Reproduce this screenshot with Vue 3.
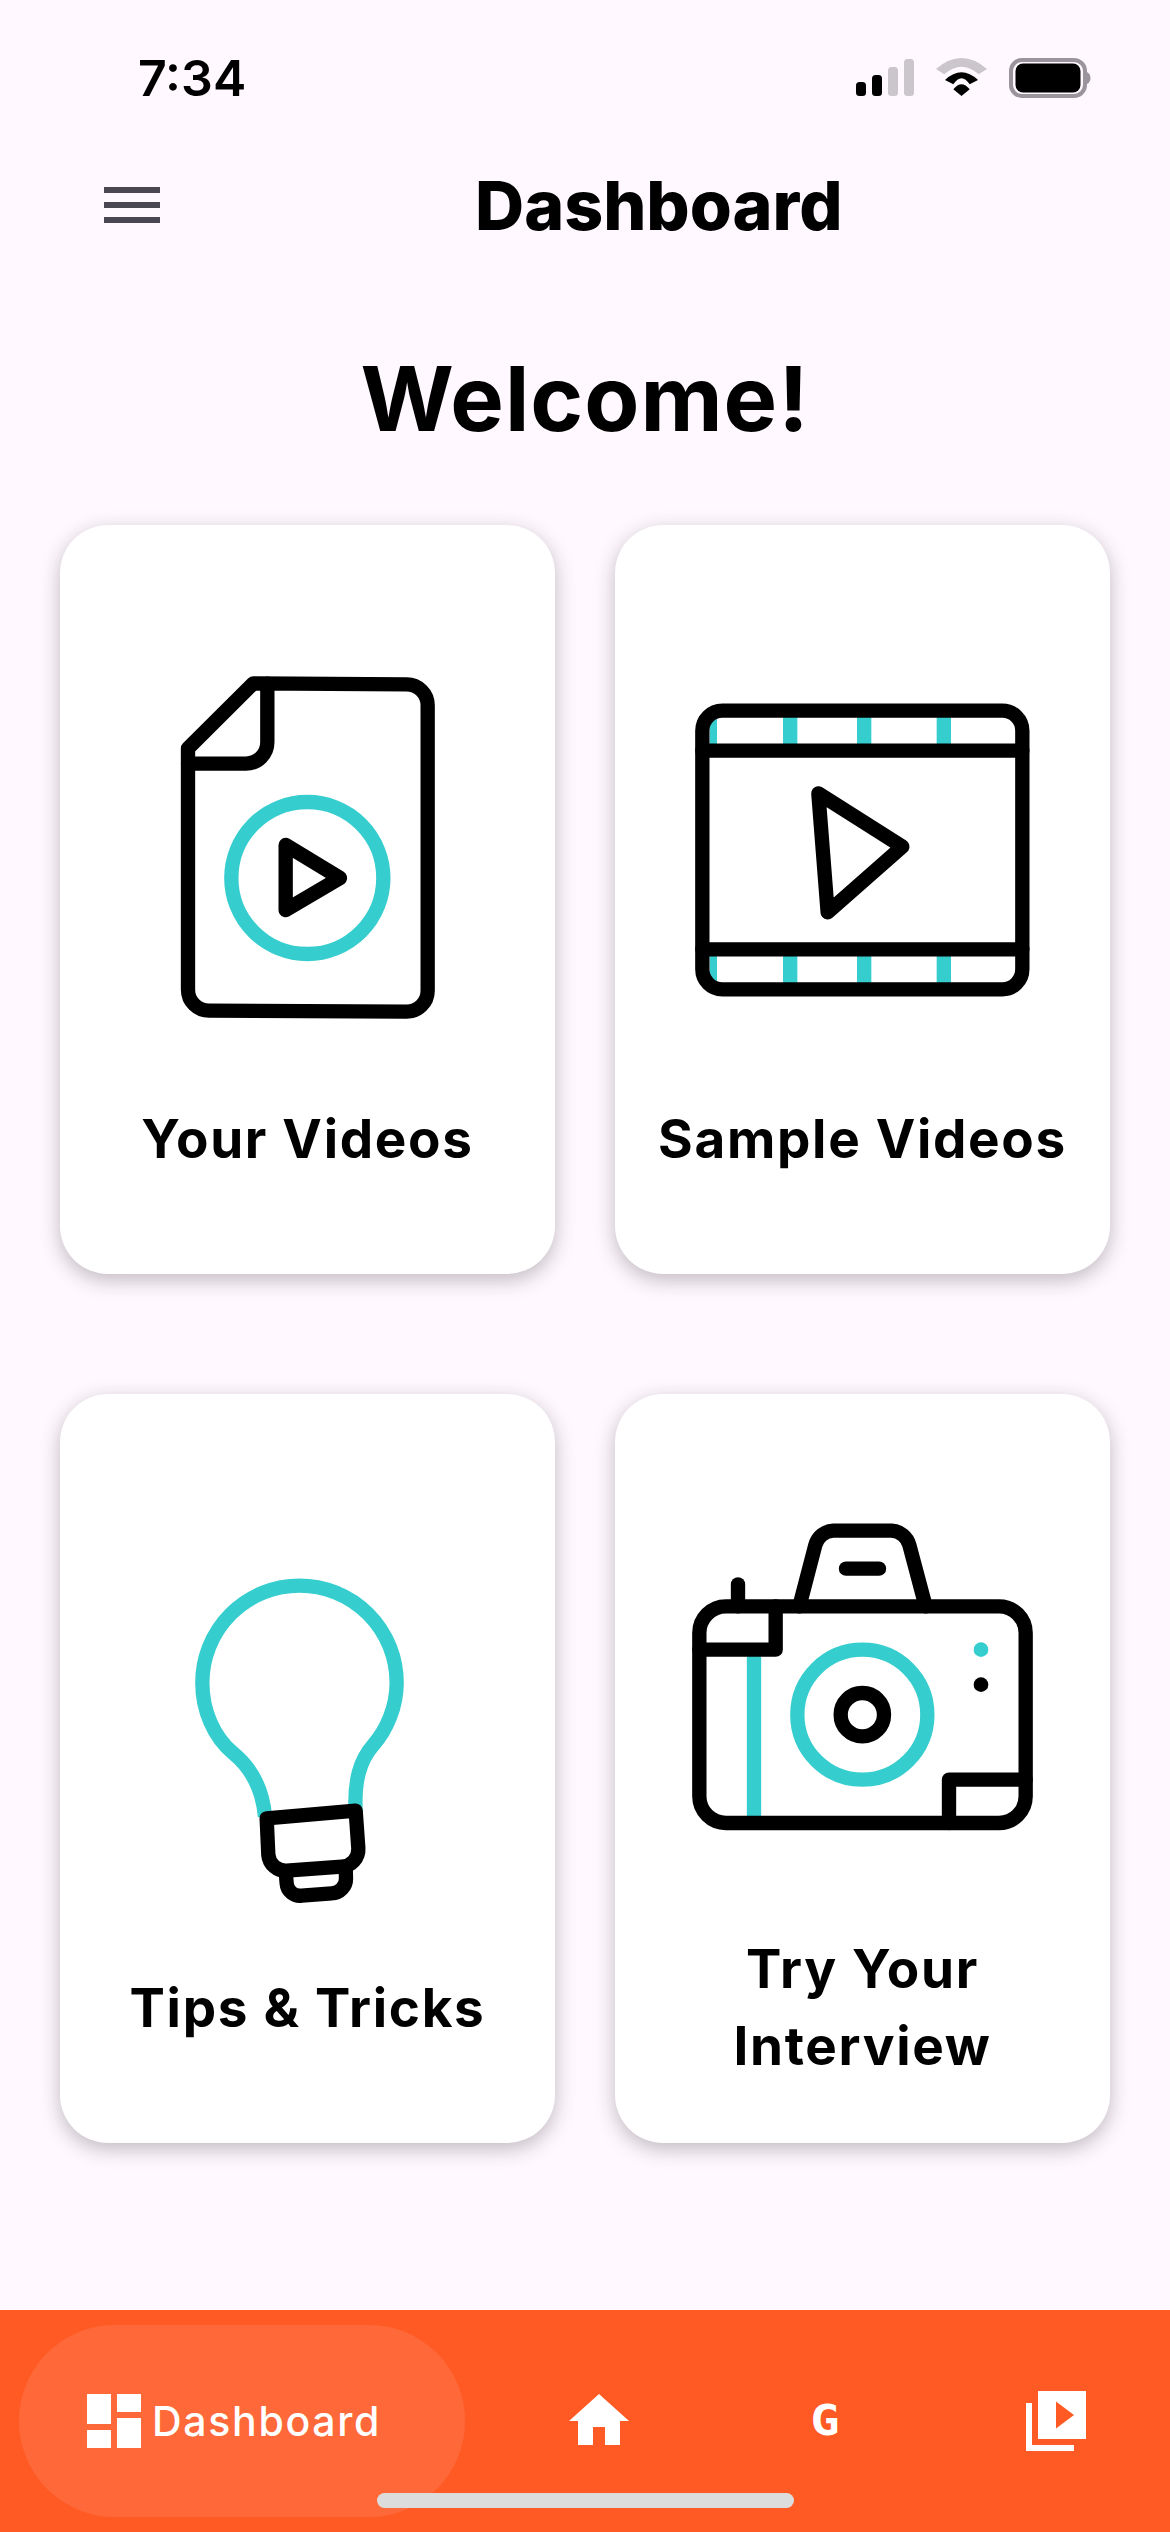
<template>
  <div class="screen">
    <div class="status-bar">
      <span class="time">7:34</span>
      <svg class="status-icons" width="234" height="40" viewBox="0 0 234 40">
        <rect x="0" y="24" width="10" height="14" rx="3.5" fill="#000" />
        <rect x="16" y="17" width="10" height="21" rx="3.5" fill="#000" />
        <rect x="32" y="9" width="10" height="29" rx="3.5" fill="#cbc6cc" />
        <rect x="48" y="1" width="10" height="37" rx="3.5" fill="#cbc6cc" />
        <path d="M80 11Q105.5-11 131 11L122.7 16.3Q105.5 1.1 88.3 16.3Z" fill="#cbc6cc" />
        <path d="M89 22Q105.5 6.6 122 22L113.7 26.3Q105.5 14.3 97.3 26.3Z" fill="#000" />
        <path d="M97.3 31.3Q105.5 21 113.7 31.3L105.5 38Z" fill="#000" />
        <rect x="155" y="2" width="74" height="36" rx="11" fill="none" stroke="#9a949c" stroke-width="4" />
        <rect x="159.500" y="5.500" width="65" height="29" rx="7.500" fill="#000" />
        <path d="M231 14Q234.500 16 234.500 20Q234.500 24 231 26Z" fill="#9a949c" />
      </svg>
    </div>

    <div class="app-header">
      <div class="menu-btn"><i></i><i></i><i></i></div>
      <h2>Dashboard</h2>
    </div>

    <h1 class="welcome">Welcome!</h1>

    <div class="card-grid">
      <div class="card">
        <svg class="card-icon" viewBox="0 0 1020 1200">
          <g transform="translate(6 0)" fill="none" stroke-width="43" stroke-linejoin="round" stroke-linecap="round">
            <circle cx="502" cy="714" r="228" stroke="#35cdce" />
            <g stroke="#000">
              <path d="M144 325L340 130L800 133A63 63 0 0 1 863 196V1052A63 63 0 0 1 800 1115L207 1112A63 63 0 0 1 144 1049Z" />
              <path d="M382 131V307A64 64 0 0 1 318 371H144" />
              <path d="M437 615L600 714L437 810Z" />
            </g>
          </g>
        </svg>
        <div class="card-label">Your Videos</div>
      </div>

      <div class="card">
        <svg class="card-icon" viewBox="0 0 1020 1200">
          <g transform="translate(-69 120)" fill="none" stroke-width="43" stroke-linejoin="round" stroke-linecap="round">
            <g fill="#35cdce">
              <rect x="119" y="100" width="22" height="100" />
              <rect x="339" y="100" width="43" height="100" />
              <rect x="561" y="100" width="43" height="100" />
              <rect x="800" y="100" width="43" height="100" />
              <rect x="119" y="820" width="22" height="100" />
              <rect x="339" y="820" width="43" height="100" />
              <rect x="561" y="820" width="43" height="100" />
              <rect x="800" y="820" width="43" height="100" />
            </g>
            <g stroke="#000">
              <rect x="97" y="92" width="960" height="836" rx="60" />
              <path d="M97 212H1057M97 808H1057" />
              <path d="M445 340L697 500L473 697Z" />
            </g>
          </g>
        </svg>
        <div class="card-label">Sample Videos</div>
      </div>

      <div class="card">
        <svg class="card-icon" viewBox="0 0 1020 1200">
          <g transform="translate(96 123)" fill="none" stroke-width="43" stroke-linejoin="round" stroke-linecap="round">
            <path stroke="#35cdce" stroke-linecap="butt" d="M285 800Q275 680 190 610C130 560 97 480 97 398A291 291 0 0 1 680 398C680 470 650 540 610 585C570 630 552 690 557 790" />
            <g stroke="#000">
              <path d="M290 805L557 782L565 895A52 52 0 0 1 515 950L350 962A52 52 0 0 1 295 915Z" />
              <path d="M347 965L350 1000A40 40 0 0 0 395 1037L485 1030A44 44 0 0 0 528 985L527 950" />
            </g>
          </g>
        </svg>
        <div class="card-label">Tips &amp; Tricks</div>
      </div>

      <div class="card">
        <svg class="card-icon" viewBox="0 0 1020 1200">
          <g transform="translate(-69 -27)" fill="none" stroke-width="43" stroke-linejoin="round" stroke-linecap="round">
            <g stroke="#35cdce">
              <path stroke-linecap="butt" d="M252 450V969" />
              <circle cx="577" cy="644" r="195" />
            </g>
            <circle cx="933" cy="449" r="22" fill="#35cdce" />
            <circle cx="933" cy="554" r="22" fill="#000" />
            <g stroke="#000">
              <rect x="88" y="319" width="979" height="650" rx="80" />
              <path d="M388 319L436 135A58 58 0 0 1 490 92H665A58 58 0 0 1 718 135L767 319" />
              <path d="M528 206H627" />
              <path d="M204 253V319" />
              <path d="M88 449H317V319" />
              <path d="M837 969V839H1067" />
              <circle cx="577" cy="644" r="65" />
            </g>
          </g>
        </svg>
        <div class="card-label">Try Your<br />Interview</div>
      </div>
    </div>

    <div class="bottom-bar">
      <div class="nav-pill">
        <svg class="nav-icon" viewBox="0 0 24 24"><path d="M3 13h8V3H3v10zm0 8h8v-6H3v6zm10 0h8V11h-8v10zm0-18v6h8V3h-8z" /></svg>
        <span>Dashboard</span>
      </div>
      <svg class="nav-icon home" viewBox="0 0 24 24"><path d="M10 20v-6h4v6h5v-8h3L12 3 2 12h3v8z" /></svg>
      <span class="nav-g">G</span>
      <svg class="nav-icon library" viewBox="0 0 24 24"><path d="M4 6H2v16h16v-2H4V6zm18-4H6v16h16V2zm-10 12.500v-9l6 4.500-6 4.500z" /></svg>
      <div class="home-indicator"></div>
    </div>
  </div>
</template>

<script setup>
</script>

<style scoped>
.screen{width:1170px;height:2532px;background:#fff9ff;display:flex;flex-direction:column;font-family:Inter,"Liberation Sans",sans-serif;color:#000;overflow:hidden}
.status-bar{height:130px;display:flex;justify-content:space-between;align-items:flex-start;padding:58px 80px 0 138px;box-sizing:border-box}
.time{font-size:50px;font-weight:600;line-height:40px}
.status-icons{display:block;overflow:visible}
.app-header{height:150px;display:flex;align-items:center;padding-left:104px}
.menu-btn{width:56px;display:flex;flex-direction:column;gap:9px}
.menu-btn i{display:block;height:6px;background:#4a4652}
.app-header h2{margin:0 0 0 315px;font-size:68px;font-weight:800;line-height:1}
.welcome{margin:0;height:245px;padding-bottom:8px;box-sizing:border-box;display:flex;align-items:center;justify-content:center;font-size:90px;font-weight:700;line-height:1;letter-spacing:1px}
.card-grid{display:grid;grid-template-columns:495px 495px;grid-auto-rows:749px;gap:120px 60px;padding:0 60px}
.card{background:#fff;border-radius:48px;box-shadow:0 6px 20px rgba(30,20,30,.28);display:flex;flex-direction:column;align-items:center;padding-top:115px;box-sizing:border-box}
.card-icon{width:340px;height:400px;display:block;flex:none;overflow:visible}
.card-label{height:160px;margin-top:19px;display:flex;align-items:center;text-align:center;font-size:53px;font-weight:700;line-height:77px;letter-spacing:1.7px}
.bottom-bar{position:relative;margin-top:auto;height:222px;background:#ff5a24;display:flex;align-items:flex-start;padding:15px 0 0 19px;box-sizing:border-box;color:#fff}
.nav-pill{width:446px;height:192px;border-radius:96px;background:#ff693a;display:flex;align-items:center;padding-left:59px;box-sizing:border-box;font-size:41px;font-weight:500;letter-spacing:1.7px}
.nav-icon{width:72px;height:72px;display:block;flex:none;fill:#fff}
.nav-pill span{margin-left:2px;line-height:1}
.home{margin:60px 0 0 98px}
.nav-g{width:72px;text-align:center;margin:73px 0 0 154px;font-family:"DejaVu Sans Mono",monospace;font-size:42px;font-weight:700;line-height:46px;transform:scaleX(1.15)}
.library{margin:60px 0 0 159px}
.home-indicator{position:absolute;left:377px;top:183px;width:417px;height:15px;border-radius:8px;background:#dcdcdc}
</style>

<style>
html,body{background:#fff9ff}
</style>
